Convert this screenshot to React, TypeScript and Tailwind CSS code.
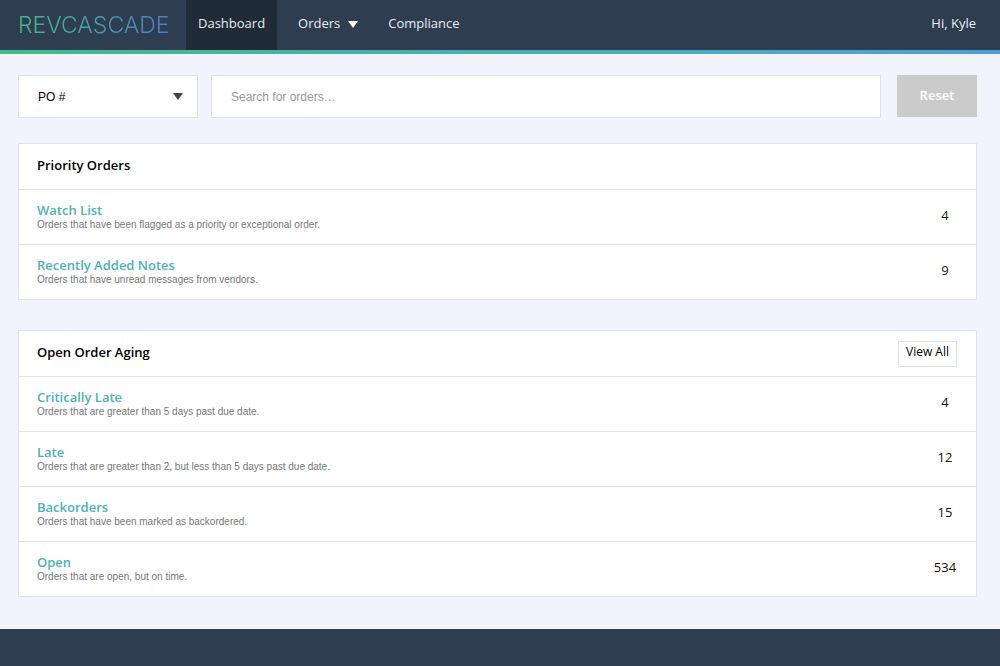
const priorityOrders = [
    { title: 'Watch List', text: 'Orders that have been flagged as a priority or exceptional order.', count: 4 },
    { title: 'Recently Added Notes', text: 'Orders that have unread messages from vendors.', count: 9 },
]

const openOrders = [
    { title: 'Critically Late', text: 'Orders that are greater than 5 days past due date.', count: 4 },
    { title: 'Late', text: 'Orders that are greater than 2, but less than 5 days past due date.', count: 12 },
    { title: 'Backorders', text: 'Orders that have been marked as backordered.', count: 15 },
    { title: 'Open', text: 'Orders that are open, but on time.', count: 534 },
]

type Order = { title: string, text: string, count: number }

function Header() {
    return <header>
        <nav className="flex h-[50px] items-stretch bg-[#2f3d51] pr-6 text-[13px] leading-5 text-[#e9edf2]">
            <a href="#" className="flex w-[186px] items-center pl-[18px]">
                <span className="bg-linear-to-r from-[#44b98b] to-[#4a80c0] bg-clip-text font-['Inter',sans-serif] text-[23px] font-light leading-6 text-transparent">REVCASCADE</span>
            </a>
            <a href="#" className="flex items-center bg-[#1f2b36] px-3 pb-1">Dashboard</a>
            <button type="button" className="ml-[21px] flex items-center gap-2 pb-1">
                Orders
                <svg width="10" height="7" viewBox="0 0 10 7" className="mt-0.5 fill-white"><path d="M0 0h10L5 7z" /></svg>
            </button>
            <a href="#" className="ml-[30px] flex items-center pb-1">Compliance</a>
            <a href="#" className="ml-auto flex items-center pb-1">Hi, Kyle</a>
        </nav>
        <div className="h-1 bg-linear-to-r from-[#45bb88] to-[#4f9fd6]"></div>
    </header>
}

function Search() {
    return <form className="flex items-start font-['Liberation_Sans',sans-serif] text-xs">
        <div className="relative w-[180px]">
            <select aria-label="Search by" className="h-[43px] w-full appearance-none border border-[#dfe1ea] bg-white px-[19px] text-black">
                <option>PO #</option>
                <option>Vendor</option>
            </select>
            <svg width="10" height="7" viewBox="0 0 10 7" className="pointer-events-none absolute right-[15px] top-[18px] fill-[#444]"><path d="M0 0h10L5 7z" /></svg>
        </div>
        <input type="search" aria-label="Search for orders" placeholder="Search for orders…" className="ml-[13px] h-[43px] min-w-0 flex-1 border border-[#dfe1ea] bg-white px-[19px] placeholder:text-[#999]" />
        <button type="reset" className="ml-4 h-[42px] w-20 bg-[#cbcbcb] font-['Open_Sans',sans-serif] text-[13px] font-semibold text-white">Reset</button>
    </form>
}

function Card({ title, orders, viewAll }: { title: string, orders: Order[], viewAll?: boolean }) {
    return <section className="border border-[#e0e3ea] bg-white">
        <div className="flex h-[45px] items-center justify-between pl-[18px] pr-[19px]">
            <h2 className="pb-1 text-[13px] font-semibold leading-5 text-black">{title}</h2>
            {viewAll && <button type="button" className="h-[26px] border border-[#dfe1ea] px-[7px] pb-1 text-xs text-black">View All</button>}
        </div>
        <ul>
            {orders.map((order) => <li key={order.title} className="flex items-center justify-between border-t border-[#e0e3ea] pb-[13px] pl-[18px] pt-3">
                <div>
                    <h3 className="text-[13px] font-semibold leading-4 text-[#4cb3b3]"><a href="#">{order.title}</a></h3>
                    <p className="font-['Liberation_Sans',sans-serif] text-[10px] leading-[13px] text-[#777]">{order.text}</p>
                </div>
                <p className="w-[62px] pb-1 text-center text-[13px] leading-5 text-[#111]">{order.count}</p>
            </li>)}
        </ul>
    </section>
}

function App() {
    return <div className="flex min-h-screen flex-col bg-[#f2f3fc] font-['Open_Sans',sans-serif]">
        <Header />
        <main className="pb-8 pl-[18px] pr-[23px] pt-[21px]">
            <Search />
            <div className="mt-[25px] flex flex-col gap-[30px]">
                <Card title="Priority Orders" orders={priorityOrders} />
                <Card title="Open Order Aging" orders={openOrders} viewAll />
            </div>
        </main>
        <footer className="min-h-9 flex-1 bg-[#2f3d51]"></footer>
    </div>
}

export default App
